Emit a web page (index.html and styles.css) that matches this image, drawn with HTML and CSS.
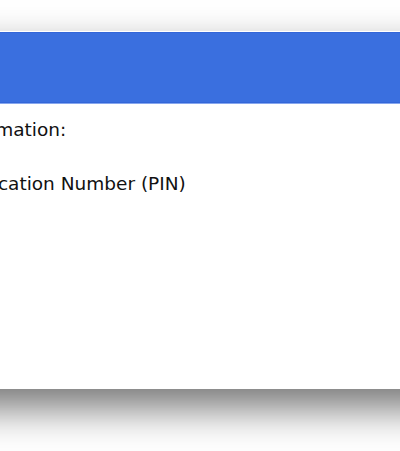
FILE: index.html
```html
<!DOCTYPE html>
<html lang="en">
<head>
  <meta charset="UTF-8" />
  <meta name="viewport" content="width=device-width, initial-scale=1.0" />
  <title>Requested Information</title>
  <link rel="stylesheet" href="styles.css">
</head>
<body>
  <!-- Dialog -->
  <div class="dialog">
    <div class="dialog__header"></div>
    <div class="dialog__body">
      <p class="dialog__text">Requested information:</p>
      <p class="dialog__text">Personal Identification Number (PIN)</p>
    </div>
  </div>
</body>
</html>
```

FILE: styles.css
```css
:root {
  --bg-color: #fff;
  --text-color: #111;
  --header-bg: #3a6fdf;
  --header-border: #3366d8;
  --header-edge: #86a6ee;
}

html, body {
  margin: 0;
  padding: 0;
  background-color: var(--bg-color);
  overflow: hidden;
}

body {
  font-family: 'DejaVu Sans', Verdana, sans-serif;
  color: var(--text-color);
  height: 451px;
}

.dialog {
  margin: 31px -100px 0 -200px;
  background-color: #fff;
  border-top: 1px solid #fff;
  box-shadow: 0 19px 38px rgba(0, 0, 0, 0.54);
}

.dialog__header {
  height: 69px;
  background-color: var(--header-bg);
  border-top: 1px solid var(--header-border);
  border-bottom: 1px solid var(--header-border);
  box-shadow: 0 1px 0 var(--header-edge);
}

.dialog__body {
  height: 286px;
  padding: 16px 0 0 49px;
  box-sizing: border-box;
}

.dialog__text {
  margin: 0 0 33px;
  font-size: 18.5px;
  line-height: 21px;
  white-space: nowrap;
}
```
